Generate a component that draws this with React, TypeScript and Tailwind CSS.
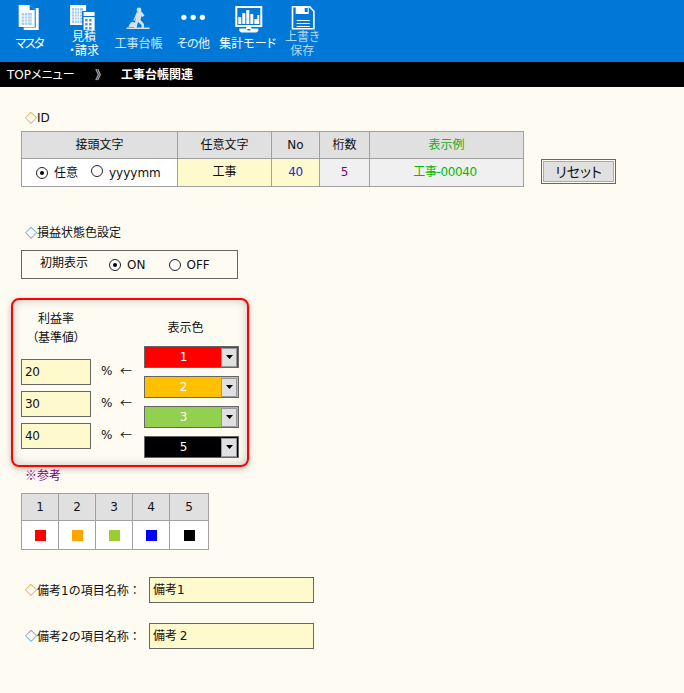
import type { ReactNode } from "react";

const font = "font-['DejaVu_Sans','Noto_Sans_CJK_JP',sans-serif]";
const sym = "font-['Noto_Sans_CJK_JP',sans-serif]";
const palt = "[font-feature-settings:'palt']";

const MasterIcon = () => (
  <svg width="32" height="28" viewBox="13.3 2 32 28" className="overflow-visible">
    <path d="M36 8h3v22H24v-2.5h12z" fill="#fff" />
    <path d="M19 5h11l5 5v17H19z" fill="#fff" />
    <path d="M30 5l5 5h-5z" fill="#0078d7" />
    <path d="M22 13h10v12H22z" fill="#a9cdef" />
    <path d="M25 13v12M28 13v12M22 16h10M22 19h10M22 22h10" stroke="#fff" strokeWidth="0.8" />
  </svg>
);

const EstimateIcon = () => (
  <svg width="32" height="28" viewBox="67.9 2 32 28" className="overflow-visible">
    <path d="M70 5h16v20H70z" fill="#fff" />
    <path d="M72 8h11v15H72z" fill="#9cc6ec" />
    <path d="M74.5 8v15M77 8v15M79.5 8v15M72 11h11M72 14h11M72 17h11M72 20h11" stroke="#fff" strokeWidth="0.9" />
    <path d="M82 11h13v20H82z" fill="#0078d7" />
    <path d="M83.5 12h11v4h-11z" fill="#fff" />
    <path d="M83.5 17h11v13h-11z" fill="#fff" />
    <path d="M85 19h2.5v2.5H85zM89 19h2.5v2.5H89zM85 23h2.5v2.5H85zM89 23h2.5v2.5H89zM85 27h2.5v2.5H85zM89 27h2.5v2.5H89z" fill="#4a9be0" />
  </svg>
);

const WorkerIcon = () => (
  <svg width="32" height="28" viewBox="122.5 2 32 28" className="overflow-visible" fill="#d4e1ec">
    <circle cx="139.5" cy="10" r="2.4" />
    <path d="M137 12.5l5-1 3 4-2 1.5-1-1-1 4 3.5 4v4h-2.5v-3l-3.5-3-1.5 6h-2.5l1.5-8 .5-6z" />
    <path d="M138 14l-3 7-1.2-.5 3-7z" />
    <path d="M129 27c.8-3 2.5-5 4-5s4 1 4 5z" />
    <rect x="127" y="27.5" width="23" height="1.5" />
  </svg>
);

const DotsIcon = () => (
  <svg width="32" height="28" viewBox="177.1 2 32 28" className="overflow-visible" fill="#fff">
    <circle cx="184" cy="17.3" r="2.6" />
    <circle cx="193.3" cy="17.3" r="2.6" />
    <circle cx="202.5" cy="17.3" r="2.6" />
  </svg>
);

const ChartIcon = () => (
  <svg width="32" height="28" viewBox="231.7 2 32 28" className="overflow-visible" fill="#fff">
    <path fillRule="evenodd" d="M235 6h27v21h-27zM237 8v17h23V8z" />
    <path d="M238 17h3v7h-3zM242 13h3v11h-3zM246 10h3v14h-3zM250 14h3v10h-3zM254 19h3v5h-3zM257 15h2v9h-2z" />
    <path d="M246 27h5v1.5h7V31l-2 1.5h-15L239 31v-2.5h7z" />
    <path d="M247 29h3v1.5h-3z" fill="#0078d7" />
  </svg>
);

const SaveIcon = () => (
  <svg width="32" height="28" viewBox="286.3 2 32 28" className="overflow-visible">
    <path d="M292.8 6.8h17.2l4.2 4.4v17.6h-21.4z" fill="none" stroke="#fff" strokeWidth="1.6" />
    <path d="M296 7h13v7h-13z" fill="#fff" />
    <path d="M305 8h3v4h-3z" fill="#0078d7" />
    <path d="M297 20.5h13M297 23.5h13M297 26.5h13" stroke="#fff" strokeWidth="1" />
  </svg>
);

const menu = [
  { label: "マスタ", icon: <MasterIcon />, color: "text-white tracking-[-1.5px]" },
  { label: "見積\n・請求", icon: <EstimateIcon />, color: "text-white" },
  { label: "工事台帳", icon: <WorkerIcon />, color: "text-[#d4e4f3]" },
  { label: "その他", icon: <DotsIcon />, color: "text-[#e8f2fb] tracking-[-0.5px]" },
  { label: "集計モード", icon: <ChartIcon />, color: "text-white" },
  { label: "上書き\n保存", icon: <SaveIcon />, color: "text-[#b4d6f4]" },
];

const Radio = ({ on }: { on?: boolean }) => (
  <span className="inline-flex h-[12px] w-[12px] shrink-0 items-center justify-center rounded-full border border-[#222] bg-white">
    {on && <span className="h-[4px] w-[4px] rounded-full bg-black" />}
  </span>
);

const Th = ({ children, w, green }: { children: ReactNode; w: string; green?: boolean }) => (
  <div className={`flex h-[26px] items-center justify-center border-r border-[#a0a0a0] bg-[#e0e0e0] last:border-r-0 ${w} ${green ? "text-[#22aa22]" : ""}`}>{children}</div>
);

const ColorSelect = ({ bg, label }: { bg: string; label: string }) => (
  <div className={`flex h-[22px] w-[95px] items-center border border-[#666] ${bg}`}>
    <span className="flex-1 pl-[1px] text-center text-white">{label}</span>
    <span className="mr-[1px] flex h-[19px] w-[16px] items-center justify-center border border-[#999] bg-[#e0e0e0]">
      <svg width="7" height="4" viewBox="0 0 7 4"><path d="M0 0h7L3.5 4z" fill="#000" /></svg>
    </span>
  </div>
);

const RateInput = ({ value }: { value: string }) => (
  <div className="flex h-[26px] w-[70px] items-center border border-[#666] bg-[#fffacd] pl-[3px] tracking-[-0.5px]">{value}</div>
);

export default function App() {
  return (
    <div className={`${font} min-h-[693px] w-[684px] bg-[#fefbf3] text-[12px] leading-[18px] text-[#111]`}>
      <header className={`flex h-[62px] items-start bg-[#0078d7] pl-[2px] pt-[2px] ${palt}`}>
        {menu.map((item) => (
          <div key={item.label} className={`flex w-[54.6px] flex-col items-center ${item.color}`}>
            {item.icon}
            <div className="flex h-[28px] items-center whitespace-pre text-center leading-[14px]">{item.label}</div>
          </div>
        ))}
      </header>
      <div className="flex h-[25px] items-center bg-black pl-[7px] text-white">
        <span className={`w-[71px] whitespace-nowrap ${palt}`}>TOPメニュー</span>
        <span className={`ml-[17px] ${sym}`}>》</span>
        <span className="ml-[14px] font-bold">工事台帳関連</span>
      </div>

      <div className="pl-[21px] pt-[21px]">
        <div className="flex h-[18px] items-center pl-[4px] pt-[2px]"><span className={`text-[#d07a00] ${sym}`}>◇</span>ID</div>
        <div className="mt-[5px] flex items-start">
          <div className="w-[503px] border border-[#a0a0a0]">
            <div className="flex border-b border-[#a0a0a0]">
              <Th w="w-[156px]">接頭文字</Th>
              <Th w="w-[94px]">任意文字</Th>
              <Th w="w-[48px]">No</Th>
              <Th w="w-[50px]">桁数</Th>
              <Th w="flex-1" green>表示例</Th>
            </div>
            <div className="flex h-[27px]">
              <div className="flex w-[156px] items-center border-r border-[#a0a0a0] bg-white pl-[14px]">
                <Radio on /><span className="ml-[6px]">任意</span><span className="ml-[13px]"><Radio /></span><span className="ml-[6px]">yyyymm</span>
              </div>
              <div className="flex w-[94px] items-center justify-center border-r border-[#a0a0a0] bg-[#fffacd] pb-[2px]">工事</div>
              <div className="flex w-[48px] items-center justify-center border-r border-[#a0a0a0] bg-[#fffacd] pb-[1px] tracking-[-0.5px] text-[#2222ee]">40</div>
              <div className="flex w-[50px] items-center justify-center border-r border-[#a0a0a0] bg-[#f0f0f0] pb-[1px] text-[#800080]">5</div>
              <div className="flex flex-1 items-center justify-center bg-[#f0f0f0] pb-[1px] pr-[3px] tracking-[-0.4px] text-[#00bb00]">工事-00040</div>
            </div>
          </div>
          <div className="ml-[17px] mt-[28px] h-[25px] w-[75px] border border-[#666] p-[1px]">
            <div className={`flex h-full items-center justify-center border border-[#aaa] bg-[#e0e0e0] text-[14px] ${palt}`}>リセット</div>
          </div>
        </div>

        <div className="mt-[36px] flex h-[18px] items-center pl-[4px] pt-[2px]"><span className={`text-[#1a6fc0] ${sym}`}>◇</span>損益状態色設定</div>
        <div className="mt-[9px] flex h-[29px] w-[217px] items-center border border-[#666] pl-[18px]">
          <span className="pb-[4px]">初期表示</span>
          <span className="ml-[21px] flex"><Radio on /></span>
          <span className="ml-[6px]">ON</span>
          <span className="ml-[24px] flex"><Radio /></span>
          <span className="ml-[5px]">OFF</span>
        </div>

        <div className="-ml-[10px] mt-[19px] flex h-[169px] w-[238px] rounded-[8px] border-2 border-[#ff0000] shadow-[inset_0_0_10px_rgba(0,0,0,0.22),0_2px_6px_rgba(0,0,0,0.25)]">
          <div className={`ml-[8px] w-[70px] pt-[10px] ${palt}`}>
            <div className="text-center leading-[19px]">利益率<br />（基準値）</div>
            <div className="mt-[11px] flex flex-col gap-[6px]">
              <RateInput value="20" />
              <RateInput value="30" />
              <RateInput value="40" />
            </div>
          </div>
          <div className="ml-[10px] mt-[62px] flex w-[31px] flex-col gap-[14px]">
            {["a", "b", "c"].map((k) => (
              <div key={k} className="flex h-[18px] items-center justify-between"><span>%</span><span className={sym}>←</span></div>
            ))}
          </div>
          <div className="ml-[12px] pt-[19px]">
            <div className="pr-[12px] text-center">表示色</div>
            <div className="mt-[9px] flex flex-col gap-[8px]">
              <ColorSelect bg="bg-[#ff0000]" label="1" />
              <ColorSelect bg="bg-[#ffc000]" label="2" />
              <ColorSelect bg="bg-[#92d050]" label="3" />
              <ColorSelect bg="bg-[#000000]" label="5" />
            </div>
          </div>
        </div>

        <div className={`-mt-[1px] h-[18px] pl-[4px] text-[#800080] ${sym}`}>※参考</div>
        <div className="mt-[9px] w-[188px] border border-[#a0a0a0]">
          <div className="flex border-b border-[#a0a0a0]">
            {["1", "2", "3", "4", "5"].map((n) => (
              <div key={n} className="flex h-[26px] w-[37px] items-center justify-center border-r border-[#a0a0a0] bg-[#e0e0e0] last:w-[38px] last:border-r-0">{n}</div>
            ))}
          </div>
          <div className="flex bg-white">
            {["bg-[#ff0000]", "bg-[#ffa500]", "bg-[#9acd32]", "bg-[#0000ff]", "bg-[#000000]"].map((c) => (
              <div key={c} className="flex h-[28px] w-[37px] items-center justify-center border-r border-[#a0a0a0] last:w-[38px] last:border-r-0">
                <span className={`h-[11px] w-[11px] ${c}`} />
              </div>
            ))}
          </div>
        </div>

        <div className="mt-[27px] flex items-center pl-[4px]">
          <span className="w-[124px] whitespace-nowrap"><span className={`text-[#d07a00] ${sym}`}>◇</span>備考1の項目名称：</span>
          <div className="flex h-[26px] w-[165px] items-center border border-[#666] bg-[#fffacd] pl-[3px]">備考1</div>
        </div>
        <div className="mt-[20px] flex items-center pl-[4px]">
          <span className="w-[124px] whitespace-nowrap"><span className={`text-[#1a6fc0] ${sym}`}>◇</span>備考2の項目名称：</span>
          <div className="flex h-[26px] w-[165px] items-center border border-[#666] bg-[#fffacd] pl-[3px] [word-spacing:-1px]">備考 2</div>
        </div>
      </div>
    </div>
  );
}
